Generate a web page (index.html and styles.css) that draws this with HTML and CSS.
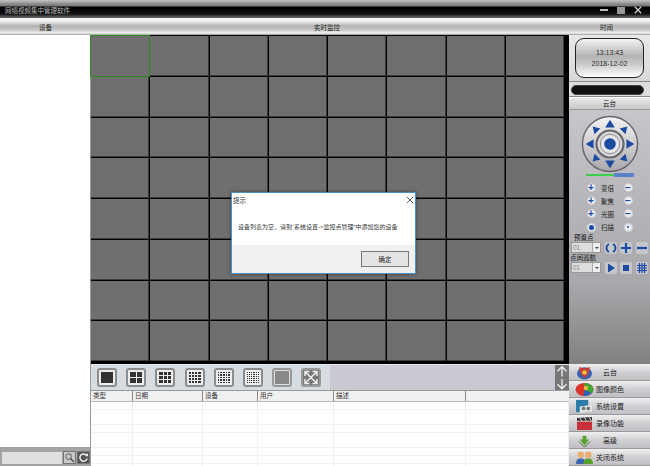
FILE: index.html
```html
<!DOCTYPE html>
<html lang="zh-CN">
<head>
    <meta charset="UTF-8">
    <title>网络视频集中管理软件</title>
    <link rel="stylesheet" href="styles.css">
</head>
<body>

    <!-- Title bar -->
    <div class="titlebar">
        <span class="app-title">网络视频集中管理软件</span>
        <div class="win-btns">
            <span class="win-min"></span>
            <span class="win-max"></span>
            <svg class="win-close" viewBox="0 0 10 10"><path d="M1 1L9 9M9 1L1 9" stroke="#ccc" stroke-width="1.6"/></svg>
        </div>
    </div>

    <!-- Column heads -->
    <div class="headbar">
        <div class="head-dev">设备</div>
        <div class="head-live">实时监控</div>
        <div class="head-time">时间</div>
    </div>

    <div class="main">
        <!-- Device list -->
        <div class="sidebar">
            <div class="dev-list"></div>
            <div class="search">
                <div class="search-input"></div>
                <div class="search-btn">
                    <svg viewBox="0 0 12 12"><circle cx="5" cy="5" r="3" fill="none" stroke="#777" stroke-width="1.2"/><path d="M7 7l4 4" stroke="#555" stroke-width="1.6"/></svg>
                </div>
                <div class="search-btn dark">
                    <svg viewBox="0 0 12 12"><path d="M9.5 4A4 4 0 1 0 10 7" fill="none" stroke="#eee" stroke-width="1.6"/><path d="M7.5 4.500h3.500V1z" fill="#eee"/></svg>
                </div>
            </div>
        </div>

        <div class="center">
            <!-- Video cells -->
            <div class="video-wrap">
                <div class="video-grid" id="videoGrid"></div>
            </div>

            <!-- Layout buttons -->
            <div class="toolbar">
                <div class="layout-btns" id="layoutBtns"></div>
                <div class="toolbar-fill"></div>
                <div class="scroll-btns">
                    <svg viewBox="0 0 14 14"><path d="M7 13V2M2 7l5-5 5 5" fill="none" stroke="#eee" stroke-width="1.5"/></svg>
                    <svg viewBox="0 0 14 14"><path d="M7 1v11M2 7l5 5 5-5" fill="none" stroke="#eee" stroke-width="1.5"/></svg>
                </div>
            </div>

            <!-- Log table -->
            <div class="log">
                <div class="log-head">
                    <div class="c-type">类型</div>
                    <div class="c-date">日期</div>
                    <div class="c-dev">设备</div>
                    <div class="c-user">用户</div>
                    <div class="c-desc">描述</div>
                    <div class="c-end"></div>
                </div>
                <div class="log-body">
                    <div class="log-col c-type"></div>
                    <div class="log-col c-date"></div>
                    <div class="log-col c-dev"></div>
                    <div class="log-col c-user"></div>
                    <div class="log-col c-desc"></div>
                    <div class="log-col c-end"></div>
                </div>
            </div>
        </div>

        <!-- Right panel -->
        <div class="right">
            <div class="clock-box">
                <div class="clock">
                    <div>13:13:43</div>
                    <div>2018-12-02</div>
                </div>
            </div>
            <div class="pill-box"><div class="pill"></div></div>

            <div class="ptz">
                <div class="ptz-title">云台</div>

                <svg class="dial" viewBox="0 0 60 60">
                    <defs>
                        <linearGradient id="dialBg" x1="0" y1="0" x2="0" y2="1">
                            <stop offset="0" stop-color="#f4f4f4"/>
                            <stop offset="1" stop-color="#a9a9ad"/>
                        </linearGradient>
                    </defs>
                    <circle cx="30" cy="30" r="28.500" fill="url(#dialBg)" stroke="#66666a" stroke-width="1.500"/>
                    <circle cx="30" cy="30" r="14" fill="#d8d8da" stroke="#66666a" stroke-width="2.200"/>
                    <circle cx="30" cy="30" r="10" fill="#e6e6e8" stroke="#8a8a8e"/>
                    <circle cx="30" cy="30" r="6" fill="#1c4aa0"/>
                    <g fill="#1c4aa0">
                        <path d="M30 5l5 8h-10z"/>
                        <path d="M30 55l5-8h-10z"/>
                        <path d="M5 30l8-5v10z"/>
                        <path d="M55 30l-8-5v10z"/>
                        <path d="M12 12l8 2-6 6z"/>
                        <path d="M48 12l-8 2 6 6z"/>
                        <path d="M12 48l8-2-6-6z"/>
                        <path d="M48 48l-8-2 6-6z"/>
                    </g>
                </svg>

                <div class="speed">
                    <div class="speed-green"></div>
                    <div class="speed-blue"></div>
                </div>

                <div class="ptz-row"><span class="round">+</span><span class="ptz-label">变倍</span><span class="round">−</span></div>
                <div class="ptz-row"><span class="round">+</span><span class="ptz-label">聚焦</span><span class="round">−</span></div>
                <div class="ptz-row"><span class="round">+</span><span class="ptz-label">光圈</span><span class="round">−</span></div>
                <div class="ptz-row"><span class="round"><i class="dot big"></i></span><span class="ptz-label">扫描</span><span class="round"><i class="dot"></i></span></div>

                <div class="preset-label">预置点</div>
                <div class="preset-row">
                    <div class="combo"><span>01</span><b></b></div>
                    <div class="sq-btn"><svg viewBox="0 0 12 12"><path d="M4 2A4.500 4.500 0 0 0 4 10M8 2A4.500 4.500 0 0 1 8 10" fill="none" stroke="#1c4aa0" stroke-width="1.800"/></svg></div>
                    <div class="sq-btn"><svg viewBox="0 0 12 12"><path d="M6 1v10M1 6h10" stroke="#1c4aa0" stroke-width="2.200"/></svg></div>
                    <div class="sq-btn"><svg viewBox="0 0 12 12"><path d="M1 6h10" stroke="#1c4aa0" stroke-width="2.200"/></svg></div>
                </div>
                <div class="preset-label cruise">点间巡航</div>
                <div class="preset-row">
                    <div class="combo"><span>01</span><b></b></div>
                    <div class="sq-btn"><svg viewBox="0 0 12 12"><path d="M3 1.500l7 4.500-7 4.500z" fill="#1c4aa0"/></svg></div>
                    <div class="sq-btn"><svg viewBox="0 0 12 12"><path d="M3 3h6v6H3z" fill="#1c4aa0"/></svg></div>
                    <div class="sq-btn"><svg viewBox="0 0 12 12"><path d="M3.500 1v10M6 1v10M8.500 1v10M1 3.500h10M1 6h10M1 8.500h10" stroke="#1c4aa0" stroke-width="1.200"/></svg></div>
                </div>
            </div>

            <!-- Function menu -->
            <div class="menu">
                <div class="menu-item">
                    <svg viewBox="0 0 20 16"><ellipse cx="10" cy="9" rx="8" ry="6.500" fill="#3a62b0"/><path d="M4 2l6 2 6-2-2 7-4 5-4-5z" fill="#d23a2c"/><circle cx="10" cy="8" r="2.500" fill="#e8c040"/></svg>
                    <span>云台</span>
                </div>
                <div class="menu-item">
                    <svg viewBox="0 0 20 16"><ellipse cx="10" cy="8" rx="9.500" ry="7" fill="#d8352a"/><path d="M10 1c5 0 9.500 3 9.500 7 0 2-1 3-2 4L10 8z" fill="#3fa63a"/><path d="M10 8l7.500 4c-2 2-5 3-8.500 3z" fill="#2a62c0"/><path d="M10 4l4 1-1 4-4-1z" fill="#e8c040"/></svg>
                    <span>图像颜色</span>
                </div>
                <div class="menu-item">
                    <svg viewBox="0 0 20 16"><path d="M1 1h13v13H1z" fill="#2c7ba8"/><path d="M5 8l13-2v7l-13 2z" fill="#e4e4e4"/><circle cx="9" cy="10" r="2" fill="#777"/><circle cx="14" cy="10" r="2" fill="#777"/></svg>
                    <span>系统设置</span>
                </div>
                <div class="menu-item">
                    <svg viewBox="0 0 20 16"><path d="M2 6h16v9H2z" fill="#c8303a"/><path d="M2 2l16-1v4H2z" fill="#333"/><path d="M5 2l2 3M10 1.500l2 3.500M15 1.500l2 3.500" stroke="#eee"/></svg>
                    <span>录像功能</span>
                </div>
                <div class="menu-item">
                    <svg viewBox="0 0 20 16"><path d="M8 3h4v4h3l-5 6-5-6h3z" fill="#5aa02c"/><path d="M4 9l6 6 6-6" fill="none" stroke="#35701a"/></svg>
                    <span>高级</span>
                </div>
                <div class="menu-item">
                    <svg viewBox="0 0 20 16"><circle cx="6" cy="5" r="3.500" fill="#e8b070"/><path d="M1 15c0-5 2-6 5-6s5 1 5 6z" fill="#3a62b0"/><circle cx="14" cy="5" r="3.500" fill="#e8b070"/><path d="M9 15c0-5 2-6 5-6s5 1 5 6z" fill="#5aa02c"/></svg>
                    <span>关闭系统</span>
                </div>
            </div>
        </div>
    </div>

    <!-- Message box -->
    <div class="dialog">
        <div class="dialog-title">
            <span>提示</span>
            <svg viewBox="0 0 10 10"><path d="M1 1L9 9M9 1L1 9" stroke="#333" stroke-width="1"/></svg>
        </div>
        <div class="dialog-msg">设备列表为空，请到“系统设置-&gt;监控点管理”中添加您的设备</div>
        <div class="dialog-foot"><button>确定</button></div>
    </div>

    <script>
        // 8x8 video cells, first one selected
        let grid = document.getElementById("videoGrid");
        for (let i = 0; i < 64; i++) {
            let cell = document.createElement("div");
            cell.className = i == 0 ? "cell active" : "cell";
            grid.appendChild(cell);
        }

        // layout buttons: 1, 4, 9, 16, 25, 36 split, then two plain ones
        let btns = document.getElementById("layoutBtns");
        [1, 2, 3, 4, 5, 6].forEach(function (n) {
            let btn = document.createElement("div");
            btn.className = "layout-btn";
            let inner = document.createElement("div");
            inner.className = "layout-inner";
            inner.style.gridTemplateColumns = "repeat(" + n + ", 1fr)";
            for (let i = 0; i < n * n; i++) {
                inner.appendChild(document.createElement("i"));
            }
            btn.appendChild(inner);
            btns.appendChild(btn);
        });

        let plain = document.createElement("div");
        plain.className = "layout-btn plain";
        plain.innerHTML = '<div class="plain-inner"></div>';
        btns.appendChild(plain);

        let full = document.createElement("div");
        full.className = "layout-btn full";
        full.innerHTML = '<svg viewBox="0 0 20 20"><path d="M2 2l16 16M18 2L2 18M2 8V2h6M12 2h6v6M18 12v6h-6M8 18H2v-6" fill="none" stroke="#eee" stroke-width="2"/></svg>';
        btns.appendChild(full);
    </script>

</body>
</html>
```

FILE: styles.css
```css
* {
    margin: 0;
    padding: 0;
    box-sizing: border-box;
    font-family: "Liberation Sans", "Noto Sans CJK SC", sans-serif;
}

body {
    width: 650px;
    height: 466px;
    overflow: hidden;
    background: #888;
    display: flex;
    flex-direction: column;
    position: relative;
    font-size: 6.5px;
    color: #333;
}

/* Title bar */
.titlebar {
    height: 18px;
    flex: none;
    display: flex;
    justify-content: space-between;
    align-items: center;
    padding: 2px 8px 0 5px;
    background: linear-gradient(#c4c4c4 0, #8a8a8a 4px, #777 6px, #000 7px, #111 14px, #444 16px, #666 18px);
}

.app-title {
    color: #bbb;
    line-height: 11px;
}

.win-btns {
    display: flex;
    align-items: center;
    gap: 9px;
}

.win-min {
    width: 8px;
    height: 2px;
    background: #bbb;
}

.win-max {
    width: 8px;
    height: 7px;
    background: #999;
}

.win-close {
    width: 8px;
    height: 8px;
}

/* Column heads */
.headbar {
    height: 17px;
    flex: none;
    display: flex;
    align-items: center;
    text-align: center;
    background: linear-gradient(#f6f6f6, #f0f0f0 3px, #b4b4b4 8px, #c8c8c8 12px, #f2f2f2 15px, #999 17px);
    color: #222;
}

.head-dev {
    width: 91px;
}

.head-live {
    width: 472px;
}

.head-time {
    width: 87px;
}

.main {
    flex: 1;
    display: flex;
    min-height: 0;
}

/* Device list */
.sidebar {
    width: 91px;
    flex: none;
    display: flex;
    flex-direction: column;
    border-right: 1px solid #999;
}

.dev-list {
    flex: 1;
    background: #fff;
}

.search {
    height: 19px;
    display: flex;
    align-items: center;
    gap: 1px;
    padding: 2px 0 0 2px;
    background: #a3a3a3;
}

.search-input {
    width: 60px;
    height: 12px;
    background: #e2dfdf;
}

.search-btn {
    width: 13px;
    height: 13px;
    background: #c9c9c9;
    border: 1px solid #777;
}

.search-btn.dark {
    background: #555;
}

.search-btn svg {
    display: block;
    width: 11px;
    height: 11px;
}

/* Video cells */
.center {
    width: 478px;
    flex: none;
    display: flex;
    flex-direction: column;
}

.video-wrap {
    height: 329px;
    flex: none;
    background: #000;
    padding: 1px 5px 3px 0;
}

.video-grid {
    height: 100%;
    display: grid;
    grid-template-columns: repeat(8, 1fr);
    grid-template-rows: repeat(8, 1fr);
    gap: 1px;
}

.cell {
    background: #6f6f6f;
    box-shadow: inset -1px -1px 0 #3c3c3c;
}

.cell.active {
    position: relative;
    z-index: 1;
    box-shadow: none;
    outline: 1px solid #2c8a1e;
}

/* Layout buttons */
.toolbar {
    height: 27px;
    flex: none;
    display: flex;
    background: #cac8d0;
    border-top: 1px solid #e8e8e8;
    border-bottom: 1px solid #999;
}

.layout-btns {
    width: 239px;
    display: flex;
    align-items: center;
    gap: 9.2px;
    padding-left: 6px;
    background: #d6dcdf;
}

.layout-btn {
    width: 20px;
    height: 19px;
    flex: none;
    padding: 2px;
    background: #eee;
    border: 2px solid #8c8c8c;
    border-radius: 3px;
}

.layout-inner {
    height: 100%;
    display: grid;
    gap: 1px;
    background: #eee;
}

.layout-inner i {
    background: #333;
}

.layout-btn.plain {
    background: #ddd;
    border-color: #999;
    padding: 1px;
}

.plain-inner {
    height: 100%;
    background: #888;
}

.layout-btn.full {
    background: #777;
    padding: 0;
    border-color: #999;
}

.layout-btn.full svg {
    display: block;
    width: 16px;
    height: 15px;
}

.toolbar-fill {
    flex: 1;
}

.scroll-btns {
    width: 14px;
    display: flex;
    flex-direction: column;
    background: #777;
}

.scroll-btns svg {
    display: block;
    width: 14px;
    height: 12.500px;
}

/* Log table */
.log {
    flex: 1;
    display: flex;
    flex-direction: column;
    background: #fff;
    min-height: 0;
}

.log-head {
    height: 11px;
    flex: none;
    display: flex;
    background: #f0f0f0;
    border-bottom: 1px solid #bbb;
    color: #333;
    line-height: 10px;
}

.log-head div {
    border-right: 1px solid #888;
    padding-left: 2px;
    overflow: hidden;
}

.log-body {
    flex: 1;
    display: flex;
    background: repeating-linear-gradient(#fff 0, #fff 7px, #f2f2f2 7px, #f2f2f2 7.7px);
}

.log-col {
    border-right: 1px solid #f0f0f0;
}

.c-type {
    width: 42px;
}

.c-date {
    width: 70px;
}

.c-dev {
    width: 55px;
}

.c-user {
    width: 76px;
}

.c-desc {
    width: 132px;
}

.c-end {
    flex: 1;
}

.log-head .c-end {
    border-right: none;
}

/* Right panel */
.right {
    width: 81px;
    flex: none;
    display: flex;
    flex-direction: column;
    background: #a6a6aa;
}

.clock-box {
    height: 47px;
    flex: none;
    padding: 3px 6px;
    background: linear-gradient(#e8e8e8, #d8d8d8);
    border-bottom: 1px solid #888;
}

.clock {
    height: 40px;
    display: flex;
    flex-direction: column;
    justify-content: center;
    gap: 2px;
    text-align: center;
    font-size: 7px;
    line-height: 9px;
    border: 1px solid #222;
    border-radius: 9px;
    background: linear-gradient(#f4f4f4, #b4b4b4 45%, #c8c8c8 65%, #fff);
    color: #333;
}

.pill-box {
    height: 15px;
    flex: none;
    padding: 3px 6px 1px 2px;
    background: #ddd;
    border-bottom: 1px solid #888;
}

.pill {
    height: 10px;
    background: #111;
    border-radius: 5px;
    border: 1px solid #444;
}

/* PTZ */
.ptz {
    height: 267px;
    flex: none;
    background: linear-gradient(#c8c8cd, #a8a8ac 70%, #808080);
    display: flex;
    flex-direction: column;
    align-items: center;
}

.ptz-title {
    width: 100%;
    height: 13px;
    flex: none;
    text-align: center;
    line-height: 12px;
    color: #222;
    background: linear-gradient(#e8e8e8, #c8c8c8);
    border-top: 1px solid #fff;
    border-bottom: 1px solid #999;
}

.dial {
    width: 58px;
    height: 58px;
    margin-top: 5px;
    flex: none;
}

.speed {
    display: flex;
    align-items: center;
    width: 48px;
    height: 4px;
    flex: none;
}

.speed-green {
    width: 28px;
    height: 2px;
    background: #3cd04a;
}

.speed-blue {
    flex: 1;
    height: 4px;
    background: #5a82c8;
}

.ptz-row {
    display: flex;
    align-items: center;
    justify-content: center;
    height: 13.200px;
    gap: 4px;
    flex: none;
}

.speed + .ptz-row {
    margin-top: 4px;
}

.ptz-label {
    width: 18px;
    padding-right: 4px;
    text-align: center;
    white-space: nowrap;
    color: #222;
}

.round {
    width: 11px;
    height: 11px;
    border-radius: 50%;
    background: radial-gradient(circle, #eeeef2 35%, #74747c 100%);
    color: #1c4aa0;
    font-size: 10px;
    font-weight: bold;
    line-height: 10px;
    text-align: center;
    display: flex;
    align-items: center;
    justify-content: center;
}

.dot {
    width: 2px;
    height: 2px;
    border-radius: 50%;
    background: #1c4aa0;
}

.dot.big {
    width: 5px;
    height: 5px;
}

.preset-label {
    align-self: flex-start;
    padding-left: 5px;
    line-height: 8px;
    height: 8px;
    color: #111;
}

.preset-label.cruise {
    padding-left: 1px;
}

.preset-row {
    display: flex;
    align-items: center;
    align-self: flex-start;
    gap: 3.500px;
    padding-left: 2px;
    height: 12px;
}

.combo {
    width: 30px;
    height: 11px;
    display: flex;
    justify-content: space-between;
    background: #ddd;
    border: 1px solid #999;
    line-height: 9px;
    color: #888;
    padding-left: 1px;
}

.combo b {
    width: 8px;
    background: #eee;
    border-left: 1px solid #aaa;
    display: flex;
    align-items: center;
    justify-content: center;
}

.combo b::after {
    content: "";
    border-left: 2px solid transparent;
    border-right: 2px solid transparent;
    border-top: 2px solid #444;
}

.sq-btn {
    width: 12px;
    height: 12px;
    background: #c4c6cc;
    border-radius: 2px;
}

.sq-btn svg {
    display: block;
    width: 12px;
    height: 12px;
}

/* Function menu */
.menu {
    flex: 1;
    display: flex;
    flex-direction: column;
    min-height: 0;
}

.menu-item {
    flex: 1;
    min-height: 0;
    display: flex;
    align-items: center;
    padding-left: 6px;
    background: linear-gradient(#f0f0f0, #d0d0d4 50%, #c0c0c4);
    border-bottom: 1px solid #999;
    color: #222;
    font-size: 7px;
}

.menu-item svg {
    width: 19px;
    height: 15px;
    flex: none;
}

.menu-item span {
    width: 32px;
    text-align: center;
    white-space: nowrap;
}

/* Message box */
.dialog {
    position: absolute;
    left: 231px;
    top: 192px;
    width: 185px;
    height: 82px;
    display: flex;
    flex-direction: column;
    background: #fff;
    border: 1px solid #4a90c8;
    box-shadow: 0 0 4px rgba(0, 0, 0, 0.4);
    color: #333;
}

.dialog-title {
    height: 14px;
    flex: none;
    display: flex;
    justify-content: space-between;
    align-items: center;
    padding: 0 1px;
}

.dialog-title svg {
    width: 8px;
    height: 8px;
}

.dialog-msg {
    flex: 1;
    padding: 15px 0 0 6px;
    font-size: 6px;
    white-space: nowrap;
}

.dialog-foot {
    height: 28px;
    flex: none;
    display: flex;
    justify-content: flex-end;
    align-items: center;
    padding-right: 6px;
    background: #f0f0f0;
}

.dialog-foot button {
    width: 48px;
    height: 16px;
    font-size: 6.5px;
    background: #e4e4e4;
    border: 1px solid #777;
    color: #222;
}
```
